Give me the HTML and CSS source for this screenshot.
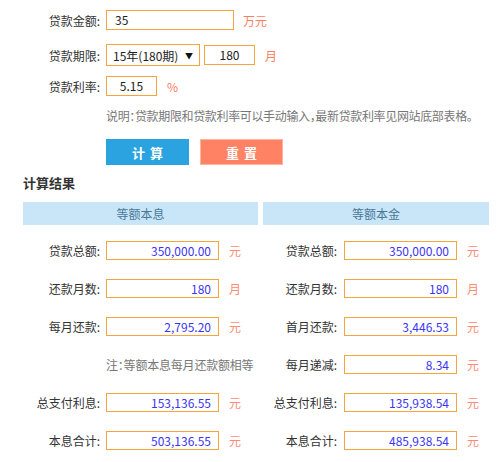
FILE: index.html
```html
<!DOCTYPE html>
<html lang="zh-CN">
<head>
<meta charset="utf-8">
<title>房贷计算器</title>
<link rel="stylesheet" href="styles.css">
</head>
<body>
<div class="page">
  <div class="form">
    <div class="row r1">
      <span class="lbl">贷款金额:</span>
      <div class="field w128">35</div>
      <span class="unit">万元</span>
    </div>
    <div class="row r2">
      <span class="lbl">贷款期限:</span>
      <div class="select"><span>15年(180期)</span><span class="arrow">▼</span></div>
      <div class="field w51 center">180</div>
      <span class="unit">月</span>
    </div>
    <div class="row r3">
      <span class="lbl">贷款利率:</span>
      <div class="field w51 center">5.15</div>
      <span class="unit">%</span>
    </div>
    <p class="tip">说明：贷款期限和贷款利率可以手动输入，最新贷款利率见网站底部表格。</p>
    <div class="buttons">
      <button class="btn calc">计算</button>
      <button class="btn reset">重置</button>
    </div>
  </div>

  <h3 class="title">计算结果</h3>

  <div class="results">
    <div class="col left">
      <div class="head">等额本息</div>
      <div class="rows">
        <div class="rrow"><span class="rlbl">贷款总额:</span><div class="rfield">350,000.00</div><span class="runit">元</span></div>
        <div class="rrow"><span class="rlbl">还款月数:</span><div class="rfield">180</div><span class="runit">月</span></div>
        <div class="rrow"><span class="rlbl">每月还款:</span><div class="rfield">2,795.20</div><span class="runit">元</span></div>
        <div class="rrow"><span class="rlbl"></span><span class="note">注：等额本息每月还款额相等</span></div>
        <div class="rrow"><span class="rlbl">总支付利息:</span><div class="rfield">153,136.55</div><span class="runit">元</span></div>
        <div class="rrow"><span class="rlbl">本息合计:</span><div class="rfield">503,136.55</div><span class="runit">元</span></div>
      </div>
    </div>
    <div class="col right">
      <div class="head">等额本金</div>
      <div class="rows">
        <div class="rrow"><span class="rlbl">贷款总额:</span><div class="rfield">350,000.00</div><span class="runit">元</span></div>
        <div class="rrow"><span class="rlbl">还款月数:</span><div class="rfield">180</div><span class="runit">月</span></div>
        <div class="rrow"><span class="rlbl">首月还款:</span><div class="rfield">3,446.53</div><span class="runit">元</span></div>
        <div class="rrow"><span class="rlbl">每月递减:</span><div class="rfield">8.34</div><span class="runit">元</span></div>
        <div class="rrow"><span class="rlbl">总支付利息:</span><div class="rfield">135,938.54</div><span class="runit">元</span></div>
        <div class="rrow"><span class="rlbl">本息合计:</span><div class="rfield">485,938.54</div><span class="runit">元</span></div>
      </div>
    </div>
  </div>
</div>
</body>
</html>
```

FILE: styles.css
```css
* { box-sizing: border-box; }
html, body { margin: 0; padding: 0; background: #fff; }
body {
  font-family: "Noto Sans CJK SC", "Noto Sans", sans-serif;
  font-size: 12px;
  color: #333;
}
.page { width: 500px; height: 462px; overflow: hidden; }

.form { padding-top: 10px; }
.row { display: flex; align-items: center; }
.r1 { height: 20px; margin-bottom: 14px; }
.r2 { height: 22px; margin-bottom: 10px; }
.r3 { height: 20px; }
.lbl {
  width: 100px;
  text-align: right;
  margin-right: 6px;
  color: #333;
}
.field {
  height: 20px;
  border: 1px solid #f6a43e;
  background: #fff;
  line-height: 18px;
  padding: 0 8px;
  color: #222;
  font-size: 12px;
}
.w128 { width: 128px; }
.w51 { width: 51px; }
.center { text-align: center; padding: 0; }
.select {
  width: 94px;
  height: 22px;
  border: 1px solid #f6a43e;
  display: flex;
  align-items: center;
  justify-content: space-between;
  padding: 0 6px 0 6px;
  margin-right: 4px;
  color: #222;
}
.arrow { font-size: 8px; color: #111; }
.unit { margin-left: 9px; color: #ff7d62; font-size: 12px; }
.r2 .unit, .r3 .unit { margin-left: 10px; }

.tip {
  margin: 12px 0 0 106px;
  line-height: 16px;
  color: #777;
  font-size: 12px;
  font-feature-settings: "halt";
  letter-spacing: -0.35px;
  white-space: nowrap;
}
.buttons { display: flex; gap: 11px; margin: 15px 0 0 106px; }
.btn {
  width: 83px;
  height: 26px;
  border: 1px solid transparent;
  color: #fff;
  font-family: inherit;
  font-size: 13px;
  font-weight: bold;
  letter-spacing: 5px;
  text-indent: 5px;
  padding: 0;
}
.calc { background: #2ba3e1; border-color: #2ba3e1; }
.reset { background: #ff8265; border-color: #ffb4a3; }

.title {
  margin: 9px 0 0 23px;
  font-size: 13px;
  font-weight: bold;
  line-height: 18px;
  color: #333;
}

.results { display: flex; gap: 5px; margin: 10px 0 0 23px; }
.col.left { width: 235px; }
.col.right { width: 226px; }
.head {
  height: 23px;
  line-height: 23px;
  background: #c8e6f8;
  color: #4b7898;
  text-align: center;
  font-size: 12px;
}
.rows { display: flex; flex-direction: column; gap: 19px; margin-top: 16px; }
.rrow { display: flex; align-items: center; height: 19px; }
.rlbl { text-align: right; color: #333; }
.left .rlbl { width: 77px; margin-right: 6px; }
.right .rlbl { width: 74px; margin-right: 7px; }
.rfield {
  width: 113px;
  height: 19px;
  border: 1px solid #f6a43e;
  line-height: 17px;
  text-align: right;
  padding-right: 7px;
  color: #3b35f2;
}
.runit { margin-left: 10px; color: #ff8a75; }
.note { color: #777; font-feature-settings: "halt"; letter-spacing: -0.2px; white-space: nowrap; }
```
